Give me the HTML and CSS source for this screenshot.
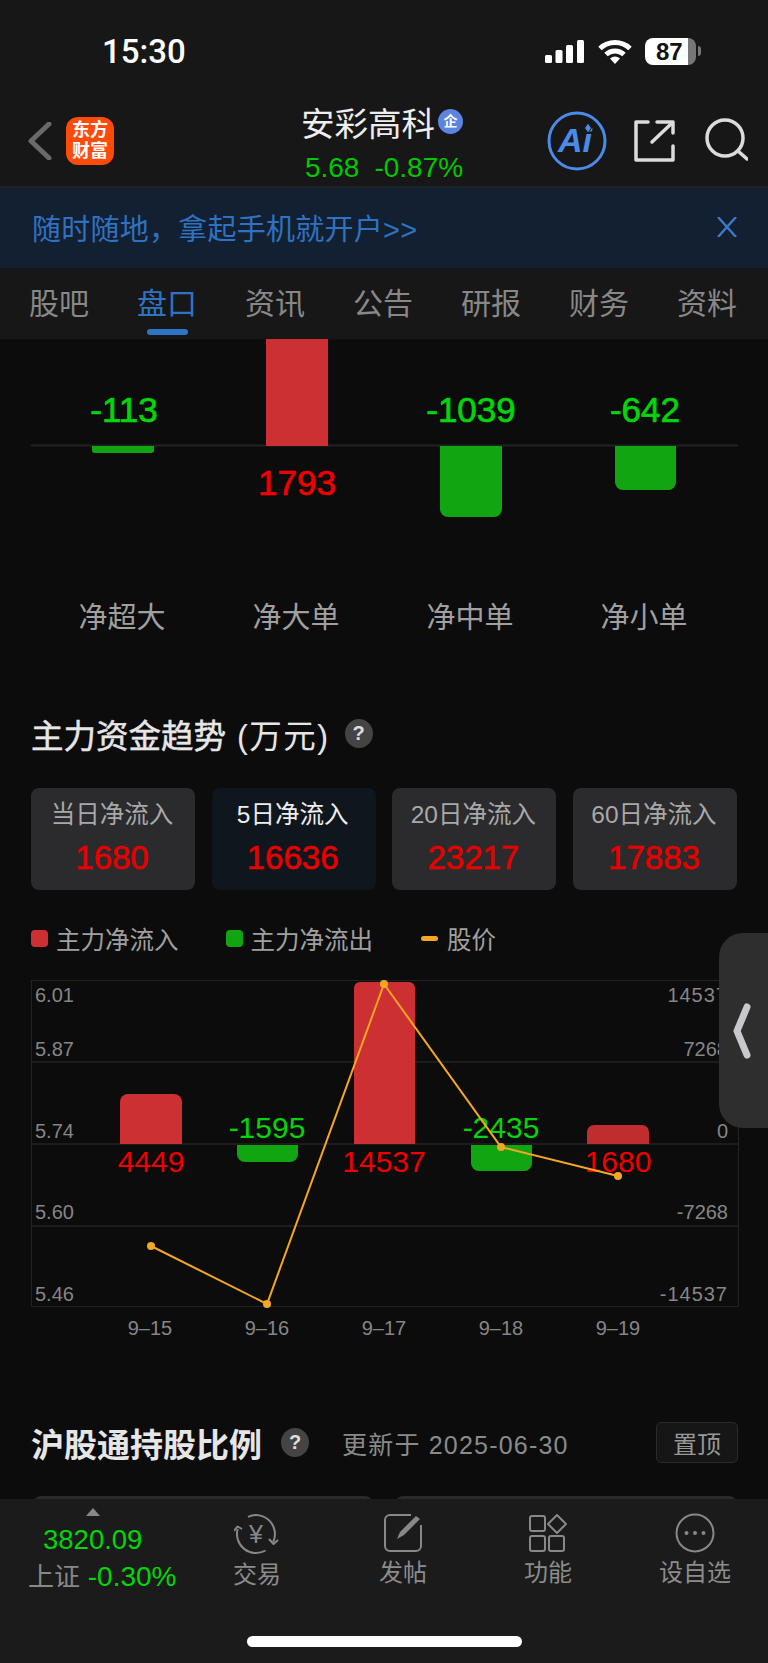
FILE: index.html
```html
<!DOCTYPE html>
<html lang="zh">
<head>
  <meta charset="UTF-8">
  <title>安彩高科</title>
  <link rel="stylesheet" href="styles.css">
</head>
<body>

<div class="status">
  <span class="time">15:30</span>
  <div class="status-icons">
    <svg width="39" height="23" viewBox="0 0 39 23" fill="#fff">
      <rect x="0" y="15" width="7" height="8" rx="1.5"/>
      <rect x="10.5" y="10" width="7" height="13" rx="1.5"/>
      <rect x="21" y="5" width="7" height="18" rx="1.5"/>
      <rect x="32" y="0" width="7" height="23" rx="1.5"/>
    </svg>
    <svg class="wifi" width="34" height="25" viewBox="0 0 34 25" fill="none" stroke="#fff" stroke-width="5">
      <path d="M2 9.5 A22 22 0 0 1 32 9.5"/>
      <path d="M8 15.5 A13 13 0 0 1 26 15.5"/>
      <path d="M12 19.5 Q17 15.5 22 19.5 L17 25Z" fill="#fff" stroke="none"/>
    </svg>
    <div class="battery"><span>87</span></div>
    <i class="battery-tip"></i>
  </div>
</div>

<header class="topbar">
  <div class="top-left">
    <svg width="24" height="38" viewBox="0 0 24 38" fill="none" stroke="#6a6a6a" stroke-width="5" stroke-linecap="round" stroke-linejoin="round">
      <path d="M21 2 L3 19 L21 36"/>
    </svg>
    <div class="logo">东方<br>财富</div>
  </div>
  <div class="stock">
    <div class="stock-name">安彩高科<span class="badge">企</span></div>
    <div class="stock-price"><span>5.68</span><span>-0.87%</span></div>
  </div>
  <div class="top-right">
    <svg width="60" height="60" viewBox="0 0 60 60">
      <circle cx="30" cy="30" r="28" fill="none" stroke="#4a8be8" stroke-width="3"/>
      <text x="28" y="41" text-anchor="middle" class="ai-text">Ai</text>
      <path d="M41 12 L44.5 17 L41 22 L37.5 17Z" fill="#4a8be8" stroke="#171717" stroke-width="1"/>
    </svg>
    <svg class="share" width="44" height="44" viewBox="0 0 44 44" fill="none" stroke="#dcdcdc" stroke-width="3.5" stroke-linecap="round" stroke-linejoin="round">
      <path d="M15 3 H3 V41 H40 V27"/>
      <path d="M24 3 H40 V14"/>
      <path d="M19 23 L39 4"/>
    </svg>
    <svg width="46" height="46" viewBox="0 0 46 46" fill="none" stroke="#dcdcdc" stroke-width="3.5" stroke-linecap="round">
      <circle cx="23" cy="20" r="18"/>
      <path d="M36 33 L45 41"/>
    </svg>
  </div>
</header>

<div class="banner">
  <span>随时随地，拿起手机就开户&gt;&gt;</span>
  <svg width="20" height="20" viewBox="0 0 20 20" fill="none" stroke="#3a7bc8" stroke-width="2.4">
    <path d="M1 0 L19 20 M19 0 L1 20"/>
  </svg>
</div>

<nav class="tabs">
  <a>股吧</a>
  <a class="active">盘口</a>
  <a>资讯</a>
  <a>公告</a>
  <a>研报</a>
  <a>财务</a>
  <a>资料</a>
</nav>

<main class="content">
  <svg class="flow-chart" width="768" height="190" viewBox="0 339 768 190">
    <path d="M31 445.5 H738" stroke="#222" stroke-width="2"/>
    <rect x="266" y="339" width="62" height="107" fill="#cc3033"/>
    <path d="M92 446 h62 v4 a3 3 0 0 1 -3 3 h-56 a3 3 0 0 1 -3 -3z" fill="#12a512"/>
    <path d="M440 446 h62 v63 a8 8 0 0 1 -8 8 h-46 a8 8 0 0 1 -8 -8z" fill="#12a512"/>
    <path d="M615 446 h61 v36 a8 8 0 0 1 -8 8 h-45 a8 8 0 0 1 -8 -8z" fill="#12a512"/>
    <text x="124" y="422" class="big-num down">-113</text>
    <text x="297" y="495" class="big-num up">1793</text>
    <text x="471" y="422" class="big-num down">-1039</text>
    <text x="645" y="422" class="big-num down">-642</text>
  </svg>

  <div class="flow-labels">
    <span>净超大</span>
    <span>净大单</span>
    <span>净中单</span>
    <span>净小单</span>
  </div>

  <div class="section-title trend-title">
    <h2>主力资金趋势 <span class="unit">(万元)</span></h2>
    <span class="help">?</span>
  </div>

  <div class="periods">
    <div class="period"><span>当日净流入</span><strong>1680</strong></div>
    <div class="period active"><span>5日净流入</span><strong>16636</strong></div>
    <div class="period"><span>20日净流入</span><strong>23217</strong></div>
    <div class="period"><span>60日净流入</span><strong>17883</strong></div>
  </div>

  <div class="legend">
    <div class="legend-item"><i class="swatch red"></i>主力净流入</div>
    <div class="legend-item"><i class="swatch green"></i>主力净流出</div>
    <div class="legend-item"><i class="dash"></i>股价</div>
  </div>

  <svg class="trend-chart" width="768" height="370" viewBox="0 975 768 370">
    <rect x="31.5" y="980.5" width="707" height="326" fill="none" stroke="#222"/>
    <path d="M31 1062 H738 M31 1144 H738 M31 1226 H738" stroke="#222" stroke-width="1.5"/>

    <text x="35" y="1002" class="axis">6.01</text>
    <text x="35" y="1056" class="axis">5.87</text>
    <text x="35" y="1138" class="axis">5.74</text>
    <text x="35" y="1219" class="axis">5.60</text>
    <text x="35" y="1301" class="axis">5.46</text>
    <text x="728" y="1002" class="axis end wide">14537</text>
    <text x="728" y="1056" class="axis end">7268</text>
    <text x="728" y="1138" class="axis end">0</text>
    <text x="728" y="1219" class="axis end">-7268</text>
    <text x="728" y="1301" class="axis end wide">-14537</text>

    <path d="M120 1144 v-42 a8 8 0 0 1 8 -8 h46 a8 8 0 0 1 8 8 v42z" fill="#cc3033"/>
    <path d="M237 1145 h61 v9 a8 8 0 0 1 -8 8 h-45 a8 8 0 0 1 -8 -8z" fill="#12a512"/>
    <path d="M354 1144 V988 a6 6 0 0 1 6 -6 h49 a6 6 0 0 1 6 6 V1144z" fill="#cc3033"/>
    <path d="M471 1145 h61 v18 a8 8 0 0 1 -8 8 h-45 a8 8 0 0 1 -8 -8z" fill="#12a512"/>
    <path d="M587 1144 v-12 a7 7 0 0 1 7 -7 h48 a7 7 0 0 1 7 7 v12z" fill="#bf2d2e"/>

    <text x="151" y="1172" class="bar-num up">4449</text>
    <text x="267" y="1138" class="bar-num down">-1595</text>
    <text x="384" y="1172" class="bar-num up">14537</text>
    <text x="501" y="1138" class="bar-num down">-2435</text>
    <text x="618" y="1172" class="bar-num up">1680</text>

    <polyline points="151,1246 267,1304 384,984 501,1147 618,1176" fill="none" stroke="#f5a623" stroke-width="2"/>
    <g fill="#f5a623">
      <circle cx="151" cy="1246" r="4"/>
      <circle cx="267" cy="1304" r="4"/>
      <circle cx="384" cy="984" r="4"/>
      <circle cx="501" cy="1147" r="4"/>
      <circle cx="618" cy="1176" r="4"/>
    </g>

    <text x="150" y="1335" class="axis mid">9–15</text>
    <text x="267" y="1335" class="axis mid">9–16</text>
    <text x="384" y="1335" class="axis mid">9–17</text>
    <text x="501" y="1335" class="axis mid">9–18</text>
    <text x="618" y="1335" class="axis mid">9–19</text>
  </svg>

  <div class="section-title hold-title">
    <h2>沪股通持股比例</h2>
    <span class="help">?</span>
    <span class="updated">更新于 2025-06-30</span>
    <button class="pin">置顶</button>
  </div>

  <div class="peek-cards">
    <div></div>
    <div></div>
  </div>

  <div class="handle">
    <svg width="18" height="56" viewBox="0 0 18 56" fill="none" stroke="#c8c8cc" stroke-width="7" stroke-linecap="round" stroke-linejoin="round">
      <path d="M14 4 L4 28 L14 52"/>
    </svg>
  </div>
</main>

<footer class="bottombar">
  <div class="bottom-row">
    <div class="index">
      <i class="index-arrow"></i>
      <div class="index-value">3820.09</div>
      <div class="index-change"><span>上证</span> -0.30%</div>
    </div>
    <div class="action action-trade">
      <svg width="46" height="42" viewBox="0 0 46 42" fill="none" stroke="#888" stroke-width="2">
        <path d="M14 3.800 A19 19 0 0 1 39.200 29"/>
        <path d="M31.500 37.500 A19 19 0 0 1 3.650 16.100"/>
        <path d="M0 18 L3.500 13.500 L8 16" stroke-linejoin="round"/>
        <path d="M35 26 L39.500 31 L44 27" stroke-linejoin="round"/>
        <text x="22" y="30" text-anchor="middle" class="yen">¥</text>
      </svg>
      <span>交易</span>
    </div>
    <div class="action">
      <svg width="40" height="40" viewBox="0 0 40 40" fill="none" stroke="#888" stroke-width="2">
        <path d="M28 2 H7 a5 5 0 0 0 -5 5 V33 a5 5 0 0 0 5 5 H33 a5 5 0 0 0 5 -5 V12"/>
        <path d="M14 26 L17 19 L33 3 L37 6 L21 22Z" fill="#888" stroke="none"/>
      </svg>
      <span>发帖</span>
    </div>
    <div class="action">
      <svg width="40" height="40" viewBox="0 0 40 40" fill="none" stroke="#888" stroke-width="2">
        <rect x="2" y="3" width="15" height="15" rx="2"/>
        <rect x="2" y="23" width="15" height="15" rx="2"/>
        <rect x="21" y="23" width="15" height="15" rx="2"/>
        <path d="M29 2 L38 11 L29 20 L20 11Z" stroke-linejoin="round"/>
      </svg>
      <span>功能</span>
    </div>
    <div class="action">
      <svg width="40" height="40" viewBox="0 0 40 40" fill="none" stroke="#888" stroke-width="2">
        <circle cx="20" cy="20" r="18.500"/>
        <g fill="#888" stroke="none">
          <circle cx="11.500" cy="20" r="2"/>
          <circle cx="20" cy="20" r="2"/>
          <circle cx="28.500" cy="20" r="2"/>
        </g>
      </svg>
      <span>设自选</span>
    </div>
  </div>
  <div class="home-indicator"></div>
</footer>

</body>
</html>
```

FILE: styles.css
```css
* {
  box-sizing: border-box;
}
body {
  margin: 0;
  width: 768px;
  height: 1663px;
  overflow: hidden;
  display: flex;
  flex-direction: column;
  background: #0c0c0c;
  font-family: "Liberation Sans", "Noto Sans CJK SC", sans-serif;
  color: #999;
}

/* status bar */
.status {
  height: 90px;
  padding: 12px 67px 0 102px;
  display: flex;
  justify-content: space-between;
  align-items: center;
  background: #171717;
}
.time {
  font-family: Roboto, sans-serif;
  font-weight: 500;
  font-size: 33px;
  color: #fff;
}
.status-icons {
  display: flex;
  align-items: center;
}
.wifi {
  margin-left: 14px;
}
.battery {
  width: 51px;
  height: 27px;
  margin-left: 13px;
  border-radius: 8px;
  background: linear-gradient(to right, #fff 84%, #777 84%);
  color: #111;
  font-weight: bold;
  font-size: 24px;
  line-height: 27px;
  padding-left: 11px;
}
.battery-tip {
  width: 3px;
  height: 10px;
  margin-left: 2px;
  border-radius: 0 3px 3px 0;
  background: #777;
}

/* header */
.topbar {
  height: 98px;
  padding: 6px 20px 0 28px;
  display: grid;
  grid-template-columns: 1fr auto 1fr;
  align-items: center;
  background: #171717;
  border-bottom: 2px solid #222;
}
.top-left {
  display: flex;
  align-items: center;
  gap: 14px;
}
.logo {
  width: 48px;
  height: 48px;
  border-radius: 12px;
  background: #ff4b0a;
  color: #fff;
  font-weight: bold;
  font-size: 18px;
  line-height: 21px;
  text-align: center;
  padding-top: 3px;
}
.stock {
  text-align: center;
  margin-right: 12px;
}
.stock-name {
  display: flex;
  align-items: center;
  height: 40px;
  font-size: 33.500px;
  color: #eee;
}
.badge {
  width: 25px;
  height: 25px;
  margin-left: 3px;
  border-radius: 50%;
  background: #5b85e0;
  color: #fff;
  font-size: 14px;
  font-weight: bold;
  line-height: 25px;
}
.stock-price {
  display: flex;
  justify-content: center;
  gap: 15px;
  margin-top: 13px;
  padding-left: 4px;
  height: 26px;
  line-height: 26px;
  font-size: 28px;
  color: #00c800;
}
.top-right {
  display: flex;
  justify-content: flex-end;
  align-items: center;
  gap: 25px;
}
.share {
  margin-left: 1px;
}
.ai-text {
  font-family: "Liberation Sans", sans-serif;
  font-weight: bold;
  font-style: italic;
  font-size: 34px;
  fill: #4a8be8;
}

/* open account banner */
.banner {
  height: 80px;
  padding: 0 31px 3px 32px;
  display: flex;
  justify-content: space-between;
  align-items: center;
  background: #132031;
  color: #2f72c2;
  font-size: 29px;
  letter-spacing: 0.25px;
}

/* tabs */
.tabs {
  height: 71px;
  padding: 0 31px 0 29px;
  display: flex;
  justify-content: space-between;
  background: #171717;
  font-size: 30px;
  color: #888;
}
.tabs a {
  position: relative;
  line-height: 72px;
}
.tabs a.active {
  color: #2d74c4;
}
.tabs a.active::after {
  content: "";
  position: absolute;
  left: 10px;
  right: 9px;
  bottom: 4px;
  height: 6px;
  border-radius: 3px;
  background: #2d74c4;
}

/* content */
.content {
  position: relative;
  flex: 1;
  overflow: hidden;
}
.flow-chart,
.trend-chart {
  display: block;
}
.big-num {
  font-size: 35px;
  stroke-width: 0.7px;
  text-anchor: middle;
}
.big-num.up {
  stroke: #f00000;
}
.big-num.down {
  stroke: #00d60a;
}
.bar-num {
  font-size: 30px;
  text-anchor: middle;
}
.up {
  fill: #f00000;
}
.down {
  fill: #00d60a;
}
.flow-labels {
  margin-top: 69px;
  padding: 0 37px 0 35px;
  display: grid;
  grid-template-columns: repeat(4, 1fr);
  text-align: center;
  font-size: 29px;
  line-height: 40px;
  color: #a0a0a0;
}
.section-title {
  display: flex;
  align-items: center;
  padding: 0 30px 0 31px;
}
.section-title h2 {
  margin: 0;
  font-size: 32.500px;
  font-weight: normal;
  -webkit-text-stroke: 0.5px #e6e6e6;
  color: #e6e6e6;
}
.unit {
  letter-spacing: 1.500px;
  -webkit-text-stroke: 0;
  margin-left: 2px;
}
.help {
  width: 28px;
  height: 29px;
  border-radius: 50%;
  background: #444;
  color: #ddd;
  font-size: 20px;
  font-weight: bold;
  line-height: 29px;
  text-align: center;
}
.trend-title {
  margin-top: 75px;
  height: 40px;
}
.trend-title .help {
  margin-left: 15px;
}
.periods {
  margin-top: 35px;
  padding: 0 31px 0 31px;
  display: grid;
  grid-template-columns: repeat(4, 164px);
  justify-content: space-between;
}
.period {
  height: 102px;
  border-radius: 8px;
  background: #2b2b2d;
  text-align: center;
  font-size: 24.500px;
  color: #a8a8a8;
  padding-top: 9px;
}
.period span {
  display: block;
  line-height: 36px;
  margin-left: -2px;
}
.period strong {
  display: block;
  margin-top: 4px;
  margin-left: -2px;
  font-weight: normal;
  font-size: 33px;
  -webkit-text-stroke: 0.6px #e60000;
  line-height: 42px;
  color: #e60000;
}
.period.active {
  background: #10161e;
  color: #eee;
}
.legend {
  margin-top: 31px;
  height: 34px;
  padding-left: 31px;
  display: flex;
  align-items: center;
  font-size: 24.500px;
  color: #a0a0a0;
}
.legend-item {
  display: flex;
  align-items: center;
}
.swatch {
  width: 17px;
  height: 17px;
  margin-right: 8px;
  border-radius: 4px;
}
.swatch.red {
  background: #cc3033;
}
.swatch.green {
  background: #12a512;
}
.legend-item:nth-child(2) {
  margin-left: 47px;
}
.legend-item:nth-child(3) {
  margin-left: 48px;
}
.dash {
  width: 17px;
  height: 5px;
  margin-right: 9px;
  border-radius: 3px;
  background: #f5a623;
}
.trend-chart {
  margin-top: 20px;
}
.axis {
  font-size: 20px;
  fill: #868686;
}
.axis.end {
  text-anchor: end;
}
.axis.wide {
  letter-spacing: 1px;
}
.axis.mid {
  text-anchor: middle;
}
.hold-title {
  margin-top: 77px;
  height: 41px;
}
.hold-title h2 {
  font-size: 33px;
  font-weight: bold;
  -webkit-text-stroke: 0;
}
.hold-title .help {
  margin-left: 19px;
}
.updated {
  margin-left: 33px;
  font-size: 25px;
  letter-spacing: 1.2px;
  color: #8a8a8a;
}
.pin {
  margin-left: auto;
  width: 82px;
  height: 41px;
  padding: 0;
  border: 1px solid #2a2a2a;
  border-radius: 5px;
  background: #161616;
  color: #999;
  font: inherit;
  font-size: 24px;
}
.peek-cards {
  margin-top: 33px;
  padding: 0 31px 0 33px;
  display: flex;
  gap: 22px;
}
.peek-cards div {
  height: 30px;
  border-radius: 8px 8px 0 0;
  background: #2a2a2a;
}
.peek-cards div:first-child {
  width: 340px;
}
.peek-cards div:last-child {
  flex: 1;
}
.handle {
  position: absolute;
  top: 594px;
  right: 0;
  width: 49px;
  height: 195px;
  padding-left: 14px;
  display: flex;
  align-items: center;
  border-radius: 24px 0 0 24px;
  background: #2e2e2e;
}

/* bottom bar */
.bottombar {
  height: 164px;
  background: #1b1b1b;
}
.bottom-row {
  height: 137px;
  position: relative;
}
.index {
  position: absolute;
  left: 28px;
  top: 9px;
  width: 152px;
}
.index-arrow {
  display: block;
  width: 0;
  margin: 0 auto 0 58px;
  border-left: 7px solid transparent;
  border-right: 7px solid transparent;
  border-bottom: 8px solid #888;
}
.index-value {
  margin: 9px 0 0 15px;
  font-size: 27.500px;
  line-height: 30px;
  color: #00d60a;
}
.index-change {
  margin-top: 4px;
  font-size: 28px;
  line-height: 36px;
  color: #00d60a;
  white-space: nowrap;
}
.index-change span {
  font-size: 26px;
  color: #888;
}
.action {
  position: absolute;
  top: 14px;
  display: flex;
  flex-direction: column;
  align-items: center;
  transform: translateX(-50%);
  font-size: 24px;
  line-height: 34px;
  color: #8c8c8c;
  white-space: nowrap;
}
.action span {
  margin-top: 3px;
}
.action-trade {
  left: 257px;
}
.action:nth-child(3) {
  left: 403px;
}
.action:nth-child(4) {
  left: 548px;
}
.action:nth-child(5) {
  left: 695px;
}
.yen {
  font-family: "Liberation Sans", sans-serif;
  font-size: 25px;
  fill: #888;
  stroke: none;
}
.home-indicator {
  width: 275px;
  height: 11px;
  margin-left: 247px;
  border-radius: 6px;
  background: #fff;
}
```
